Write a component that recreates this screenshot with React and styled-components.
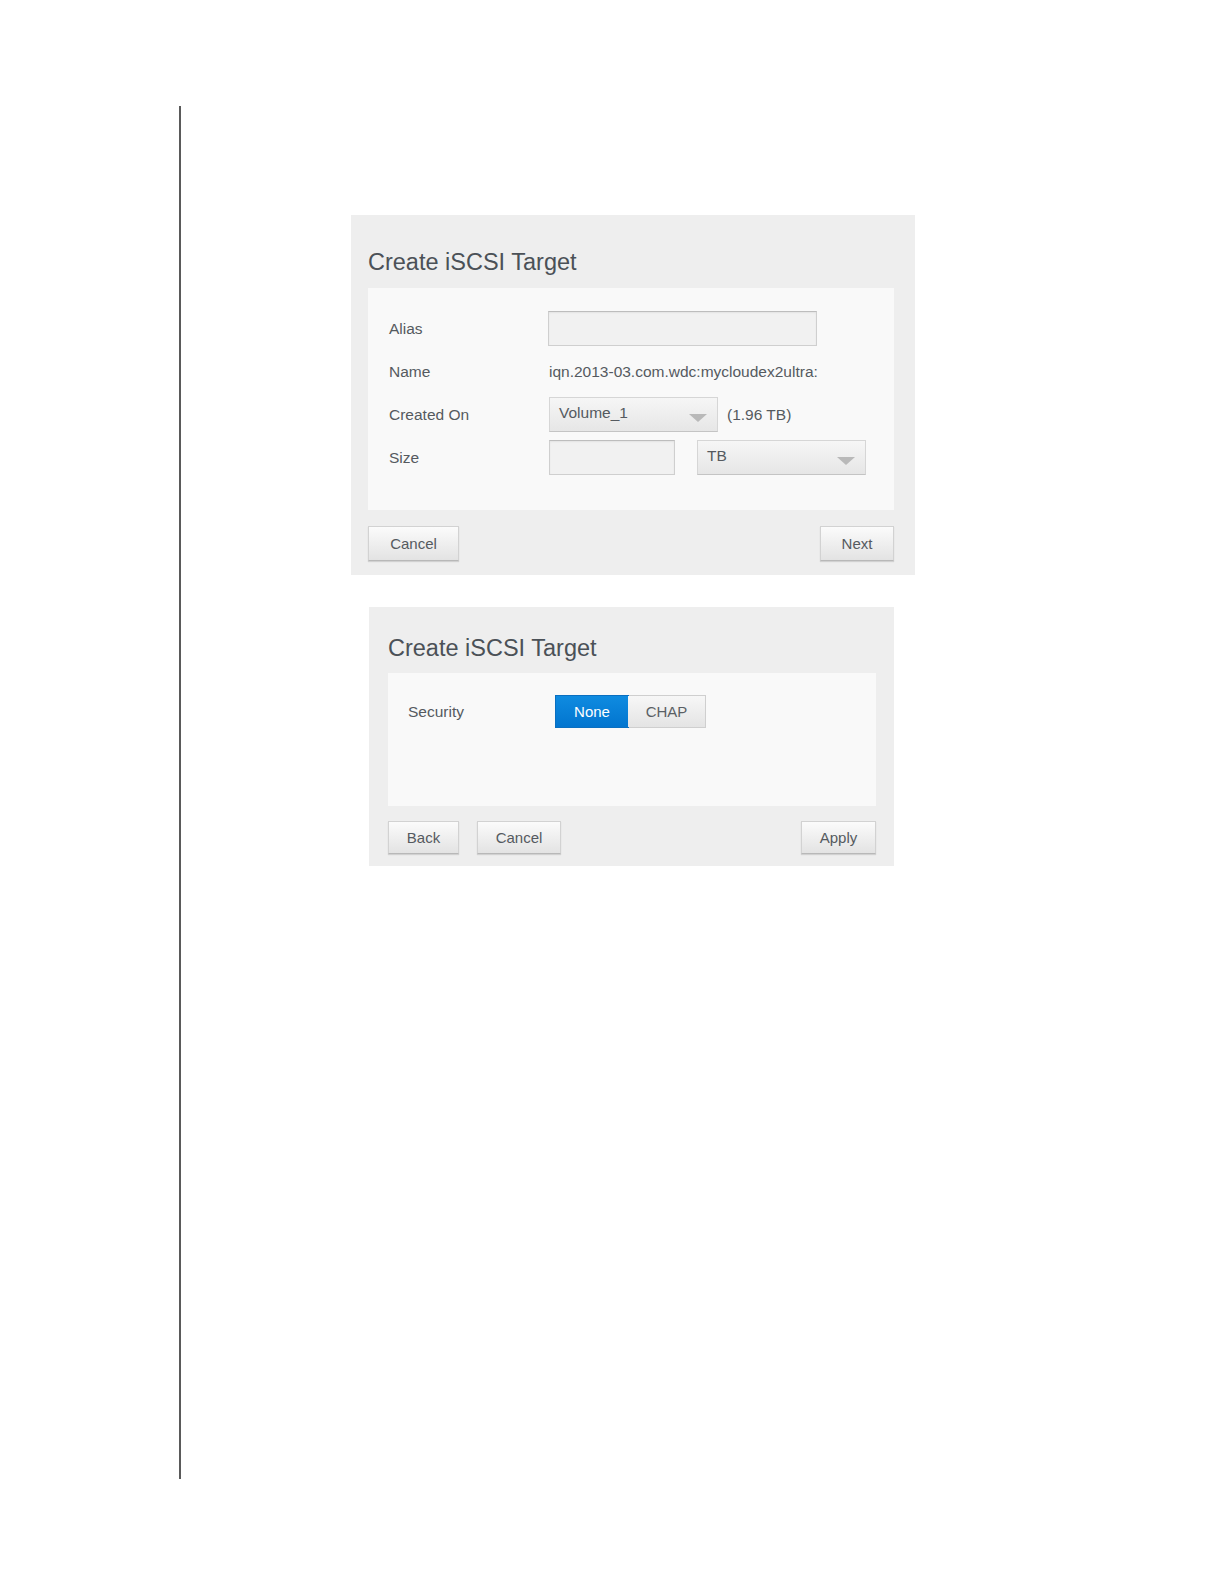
import React from "react";
import styled, { createGlobalStyle } from "styled-components";

const GlobalStyle = createGlobalStyle`
  html, body {
    margin: 0;
    padding: 0;
    background: #ffffff;
    font-family: "Liberation Sans", Arial, sans-serif;
  }
`;

const Page = styled.div`
  width: 1225px;
  height: 1585px;
  padding-top: 106px;
  box-sizing: border-box;
`;

const Rule = styled.div`
  margin-left: 179px;
  height: 1373px;
  border-left: 2px solid #5a5a5a;
  display: flex;
  flex-direction: column;
  align-items: flex-start;
  padding-top: 109px;
  box-sizing: border-box;
  gap: 32px;
`;

const Panel = styled.div`
  margin-left: ${({ offset }) => offset}px;
  width: ${({ width }) => width}px;
  background: #eeeeee;
  box-sizing: border-box;
  padding: ${({ pad }) => pad};
  display: flex;
  flex-direction: column;
`;

const Title = styled.h2`
  margin: 0 0 ${({ gap }) => gap}px 0;
  font-size: 23.5px;
  line-height: 26px;
  font-weight: normal;
  color: #4b5157;
`;

const Body = styled.div`
  background: #f9f9f9;
  box-sizing: border-box;
  height: ${({ height }) => height}px;
  padding: ${({ pad }) => pad};
`;

const Row = styled.div`
  display: flex;
  align-items: center;
  height: ${({ height }) => height}px;
`;

const Label = styled.div`
  width: ${({ width }) => width}px;
  flex-shrink: 0;
  font-size: 15.5px;
  color: #555a5f;
`;

const Value = styled.div`
  font-size: 15.5px;
  color: #555a5f;
`;

const Input = styled.div`
  width: ${({ width }) => width}px;
  height: 35px;
  box-sizing: border-box;
  background: #f1f1f1;
  border: 1px solid #cfcfcf;
  border-top-color: #bdbdbd;
  box-shadow: inset 0 1px 2px rgba(0, 0, 0, 0.06);
`;

const Select = styled.div`
  width: ${({ width }) => width}px;
  height: 35px;
  box-sizing: border-box;
  margin-right: ${({ after }) => after || 0}px;
  margin-left: ${({ before }) => before || 0}px;
  background: linear-gradient(#f6f6f6, #e6e6e6);
  border: 1px solid #d6d6d6;
  border-bottom-color: #c4c4c4;
  display: flex;
  align-items: center;
  justify-content: space-between;
  padding: 0 10px 0 9px;
  font-size: 15.5px;
  color: #555a5f;
  span {
    margin-top: -4px;
  }
  &::after {
    content: "";
    width: 0;
    height: 0;
    margin-top: 6px;
    border-left: 9px solid transparent;
    border-right: 9px solid transparent;
    border-top: 8px solid #b9b9b9;
  }
`;

const Segments = styled.div`
  display: flex;
  border: 1px solid #cfcfcf;
`;

const Segment = styled.div`
  width: ${({ width }) => width}px;
  height: 31px;
  display: flex;
  align-items: center;
  justify-content: center;
  font-size: 15px;
  color: ${({ active }) => (active ? "#ffffff" : "#5a5f64")};
  background: ${({ active }) =>
    active
      ? "linear-gradient(#0f8be0, #0275cf)"
      : "linear-gradient(#f7f7f7, #e4e4e4)"};
  outline: ${({ active }) => (active ? "1px solid #0a6fc0" : "none")};
`;

const Actions = styled.div`
  display: flex;
  margin-top: ${({ gap }) => gap}px;
  gap: 18px;
`;

const Button = styled.div`
  width: ${({ width }) => width}px;
  height: ${({ height }) => height}px;
  box-sizing: border-box;
  margin-left: ${({ push }) => (push ? "auto" : "0")};
  background: linear-gradient(#fbfbfb, #e3e3e3);
  border: 1px solid #d2d2d2;
  border-bottom-color: #b8b8b8;
  box-shadow: 0 1px 1px rgba(0, 0, 0, 0.12);
  display: flex;
  align-items: center;
  justify-content: center;
  font-size: 15px;
  color: #555a5f;
`;

export default function App() {
  return (
    <>
      <GlobalStyle />
      <Page>
        <Rule>
          <Panel offset={170} width={564} pad="34px 21px 14px 17px">
            <Title gap={13}>Create iSCSI Target</Title>
            <Body height={222} pad="19px 21px 0 21px">
              <Row height={43}>
                <Label width={159}>Alias</Label>
                <Input width={269} />
              </Row>
              <Row height={43}>
                <Label width={160}>Name</Label>
                <Value>iqn.2013-03.com.wdc:mycloudex2ultra:</Value>
              </Row>
              <Row height={43}>
                <Label width={160}>Created On</Label>
                <Select width={169} after={9}>
                  <span>Volume_1</span>
                </Select>
                <Value>(1.96 TB)</Value>
              </Row>
              <Row height={43}>
                <Label width={160}>Size</Label>
                <Input width={126} />
                <Select width={169} before={22}>
                  <span>TB</span>
                </Select>
              </Row>
            </Body>
            <Actions gap={16}>
              <Button width={91} height={35}>Cancel</Button>
              <Button width={74} height={35} push>
                Next
              </Button>
            </Actions>
          </Panel>

          <Panel offset={188} width={525} pad="28px 18px 12px 19px">
            <Title gap={12}>Create iSCSI Target</Title>
            <Body height={133} pad="22px 20px 0 20px">
              <Row height={33}>
                <Label width={147}>Security</Label>
                <Segments>
                  <Segment width={72} active>
                    None
                  </Segment>
                  <Segment width={77}>CHAP</Segment>
                </Segments>
              </Row>
            </Body>
            <Actions gap={15}>
              <Button width={71} height={33}>Back</Button>
              <Button width={84} height={33}>Cancel</Button>
              <Button width={75} height={33} push>
                Apply
              </Button>
            </Actions>
          </Panel>
        </Rule>
      </Page>
    </>
  );
}
